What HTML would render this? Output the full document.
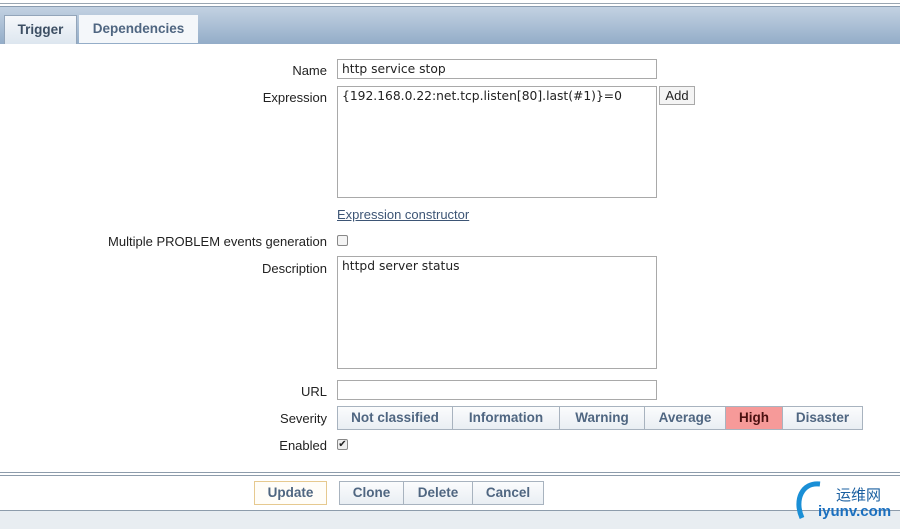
<!DOCTYPE html>
<html><head><style>
*{margin:0;padding:0;box-sizing:border-box}
body{width:900px;height:529px;position:relative;background:#fff;font-family:"Liberation Sans","DejaVu Sans",sans-serif;font-size:13px;color:#222;overflow:hidden}
.abs{position:absolute}
.lbl{position:absolute;right:573px;text-align:right;white-space:nowrap}
.inp{position:absolute;border:1px solid #a9a9a9;background:#fff;padding:2px 4px;font-family:"DejaVu Sans",sans-serif;font-size:12.3px}
.btn{position:absolute;border:1px solid #a8b3bf;background:linear-gradient(#fbfcfd,#e9eef3);color:#4f6681;font-weight:bold;font-size:13.5px;text-align:center;line-height:22px}
</style></head><body>
<div class="abs" style="left:0;top:0;width:900px;height:44px;background:#fff"></div>
<div class="abs" style="left:0;top:3px;width:900px;height:1px;background:#9aa6b2"></div>
<div class="abs" style="left:0;top:6px;width:900px;height:38px;background:linear-gradient(#c3d2e2,#93adc8);border-top:1px solid #8a9cb0"></div>
<div class="abs" style="left:4px;top:15px;width:73px;height:29px;background:linear-gradient(#f6f8fb,#dde6ef);border:1px solid #93a5ba;border-bottom:none;color:#3c4e63;font-weight:bold;font-size:13.5px;text-align:center;line-height:28px">Trigger</div>
<div class="abs" style="left:79px;top:15px;width:119px;height:28px;background:#f4f7fa;color:#4f6681;font-weight:bold;font-size:13.5px;text-align:center;line-height:28px">Dependencies</div>

<div class="lbl" style="top:63px">Name</div>
<div class="inp" style="left:337px;top:59px;width:320px;height:20px;line-height:14px">http service stop</div>
<div class="lbl" style="top:90px">Expression</div>
<div class="inp" style="left:337px;top:86px;width:320px;height:112px">{192.168.0.22:net.tcp.listen[80].last(#1)}=0</div>
<div class="abs" style="left:659px;top:86px;width:36px;height:19px;border:1px solid #a9a9a9;background:#f4f4f4;text-align:center;line-height:17px">Add</div>
<div class="abs" style="left:337px;top:207px;color:#3d5575;text-decoration:underline">Expression constructor</div>
<div class="lbl" style="top:234px">Multiple PROBLEM events generation</div>
<div class="abs" style="left:337px;top:235px;width:11px;height:11px;border:1px solid #888;border-radius:2px;background:#f4f4f4"></div>
<div class="lbl" style="top:261px">Description</div>
<div class="inp" style="left:337px;top:256px;width:320px;height:113px">httpd server status</div>
<div class="lbl" style="top:384px">URL</div>
<div class="inp" style="left:337px;top:380px;width:320px;height:20px"></div>
<div class="lbl" style="top:411px">Severity</div>
<div class="btn" style="left:337px;top:406px;width:116px;height:24px">Not classified</div>
<div class="btn" style="left:452px;top:406px;width:108px;height:24px">Information</div>
<div class="btn" style="left:559px;top:406px;width:86px;height:24px">Warning</div>
<div class="btn" style="left:644px;top:406px;width:82px;height:24px">Average</div>
<div class="btn" style="left:725px;top:406px;width:58px;height:24px;background:#f69a99;color:#4a1010">High</div>
<div class="btn" style="left:782px;top:406px;width:81px;height:24px">Disaster</div>
<div class="lbl" style="top:438px">Enabled</div>
<div class="abs" style="left:337px;top:439px;width:11px;height:11px;border:1px solid #888;border-radius:2px;background:#eee;font-size:10px;line-height:9px;text-align:center">✔</div>

<div class="abs" style="left:0;top:472px;width:900px;height:1px;background:#8d9cab"></div>
<div class="abs" style="left:0;top:475px;width:900px;height:1px;background:#8d9cab"></div>
<div class="abs" style="left:0;top:510px;width:900px;height:1px;background:#8d9cab"></div>
<div class="abs" style="left:0;top:511px;width:900px;height:18px;background:#e8edf1"></div>
<div class="btn" style="left:254px;top:481px;width:73px;height:24px;border-color:#e6c98f;background:#fffdf8">Update</div>
<div class="btn" style="left:339px;top:481px;width:65px;height:24px">Clone</div>
<div class="btn" style="left:403px;top:481px;width:70px;height:24px">Delete</div>
<div class="btn" style="left:472px;top:481px;width:72px;height:24px">Cancel</div>
<svg class="abs" style="left:790px;top:478px" width="40" height="48"><path d="M30 6 C12 4 4 22 12 40" stroke="#1a8fd6" stroke-width="5" fill="none"/></svg>
<div class="abs" style="left:836px;top:484px;font-family:'Noto Sans CJK SC',sans-serif;font-size:15px;color:#1a5fa0">运维网</div>
<div class="abs" style="left:818px;top:503px;font-size:15px;font-weight:bold;color:#1a6fbf">iyunv.com</div>
</body></html>
